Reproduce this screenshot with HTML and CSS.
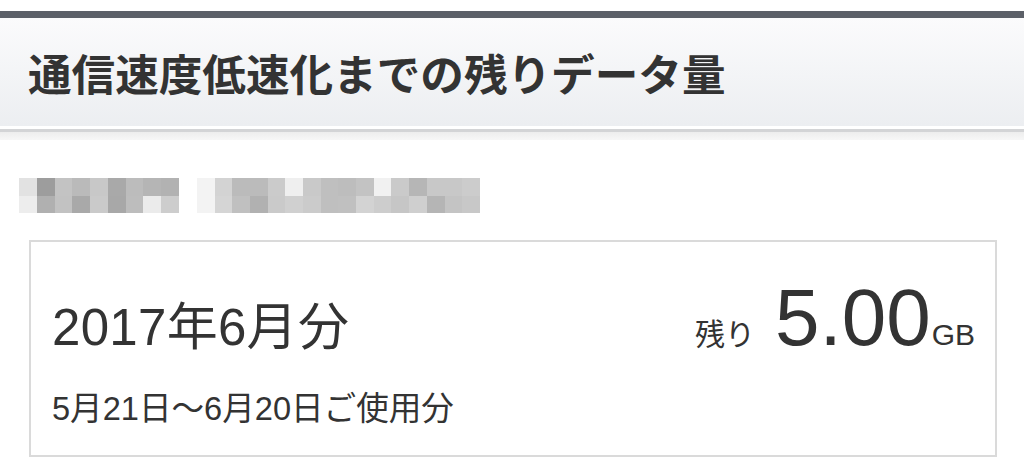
FILE: index.html
```html
<!DOCTYPE html>
<html lang="ja">
<head>
<meta charset="utf-8">
<title>通信速度低速化までの残りデータ量</title>
<link rel="stylesheet" href="styles.css">
</head>
<body>
<div class="page">
  <header class="header">
    <h1 class="title">通信速度低速化までの残りデータ量</h1>
  </header>
  <div class="rule"></div>

  <div class="blur" aria-hidden="true">
    <div class="blur-group g1">
      <span></span><span></span><span></span><span></span><span></span><span></span><span></span><span></span><span></span>
      <span></span><span></span><span></span><span></span><span></span><span></span><span></span><span></span><span></span>
    </div>
    <div class="blur-group g2">
      <span></span><span></span><span></span><span></span><span></span><span></span><span></span><span></span>
      <span></span><span></span><span></span><span></span><span></span><span></span><span></span><span></span>
      <span></span><span></span><span></span><span></span><span></span><span></span><span></span><span></span>
      <span></span><span></span><span></span><span></span><span></span><span></span><span></span><span></span>
    </div>
  </div>

  <section class="box">
    <div class="row">
      <div class="month">2017年6月分</div>
      <div class="remain"><span class="label">残り</span><span class="num">5.00</span><span class="unit">GB</span></div>
    </div>
    <div class="period">5月21日〜6月20日ご使用分</div>
  </section>
</div>
</body>
</html>
```

FILE: styles.css
```css
html, body {
  margin: 0;
  padding: 0;
  background: #ffffff;
}

.page {
  padding-top: 11px;
  font-family: "Liberation Sans", "Noto Sans CJK JP", sans-serif;
  color: #333333;
}

.header {
  border-top: 7px solid #5c6068;
  height: 108px;
  box-sizing: content-box;
  background: linear-gradient(#fbfbfc, #eceef1);
  border-bottom: 3px solid #ffffff;
  display: flex;
  align-items: center;
  padding-left: 28px;
}

.title {
  margin: 0;
  font-family: "Noto Sans CJK JP", sans-serif;
  font-weight: 600;
  font-size: 43.6px;
  line-height: 44px;
  color: #333333;
}

.rule {
  height: 8px;
  border-top: 3px solid #d3d4d6;
  background: linear-gradient(#ededed, #f7f7f7);
}

.blur {
  display: flex;
  gap: 18px;
  margin-top: 38px;
  padding-left: 19px;
  height: 35px;
}

.blur-group {
  display: grid;
  grid-template-rows: repeat(2, 17.5px);
}

.g1 { grid-template-columns: repeat(9, 17.78px); }
.g2 { grid-template-columns: repeat(16, 17.7px); }

.blur-group span { display: block; }

/* group 1 */
.g1 span:nth-child(1)  { background: #e2e2e2; }
.g1 span:nth-child(2)  { background: #9d9d9d; }
.g1 span:nth-child(3)  { background: #c3c3c3; }
.g1 span:nth-child(4)  { background: #bababa; }
.g1 span:nth-child(5)  { background: #c8c8c8; }
.g1 span:nth-child(6)  { background: #a9a9a9; }
.g1 span:nth-child(7)  { background: #bcbcbc; }
.g1 span:nth-child(8)  { background: #b5b5b5; }
.g1 span:nth-child(9)  { background: #b2b2b2; }
.g1 span:nth-child(10) { background: #ededed; }
.g1 span:nth-child(11) { background: #b0b0b0; }
.g1 span:nth-child(12) { background: #c2c2c2; }
.g1 span:nth-child(13) { background: #a9a9a9; }
.g1 span:nth-child(14) { background: #cacaca; }
.g1 span:nth-child(15) { background: #a8a8a8; }
.g1 span:nth-child(16) { background: #bdbdbd; }
.g1 span:nth-child(17) { background: #ebebeb; }
.g1 span:nth-child(18) { background: #cdcdcd; }

/* group 2 */
.g2 span:nth-child(1)  { background: #f3f3f3; }
.g2 span:nth-child(2)  { background: #d3d3d3; }
.g2 span:nth-child(3)  { background: #bbbbbb; }
.g2 span:nth-child(4)  { background: #bbbbbb; }
.g2 span:nth-child(5)  { background: #cbcbcb; }
.g2 span:nth-child(6)  { background: #efefef; }
.g2 span:nth-child(7)  { background: #c9c9c9; }
.g2 span:nth-child(8)  { background: #bfbfbf; }
.g2 span:nth-child(9)  { background: #bdbdbd; }
.g2 span:nth-child(10) { background: #c3c3c3; }
.g2 span:nth-child(11) { background: #f1f1f1; }
.g2 span:nth-child(12) { background: #cacaca; }
.g2 span:nth-child(13) { background: #b6b6b6; }
.g2 span:nth-child(14) { background: #c8c8c8; }
.g2 span:nth-child(15) { background: #c8c8c8; }
.g2 span:nth-child(16) { background: #cccccc; }
.g2 span:nth-child(17) { background: #f3f3f3; }
.g2 span:nth-child(18) { background: #d5d5d5; }
.g2 span:nth-child(19) { background: #c0c0c0; }
.g2 span:nth-child(20) { background: #b1b1b1; }
.g2 span:nth-child(21) { background: #cacaca; }
.g2 span:nth-child(22) { background: #d0d0d0; }
.g2 span:nth-child(23) { background: #cbcbcb; }
.g2 span:nth-child(24) { background: #bfbfbf; }
.g2 span:nth-child(25) { background: #c0c0c0; }
.g2 span:nth-child(26) { background: #d3d3d3; }
.g2 span:nth-child(27) { background: #cdcdcd; }
.g2 span:nth-child(28) { background: #c6c6c6; }
.g2 span:nth-child(29) { background: #cfcfcf; }
.g2 span:nth-child(30) { background: #b5b5b5; }
.g2 span:nth-child(31) { background: #c4c4c4; }
.g2 span:nth-child(32) { background: #c8c8c8; }

.box {
  margin: 27px 0 0 29px;
  width: 968px;
  height: 217px;
  box-sizing: border-box;
  border: 2px solid #dadada;
  padding: 46px 20px 0 21px;
}

.row {
  display: flex;
  justify-content: space-between;
  align-items: baseline;
}

.month {
  font-size: 51px;
  line-height: 60px;
  letter-spacing: 0.3px;
}

.remain {
  font-size: 30px;
  line-height: 60px;
}

.label {
  margin-right: 20px;
}

.num {
  font-size: 80px;
  line-height: 60px;
}

.unit {
  font-size: 30px;
  margin-left: 1px;
}

.period {
  font-size: 32.6px;
  line-height: 40px;
  margin-top: 24px;
}
```
